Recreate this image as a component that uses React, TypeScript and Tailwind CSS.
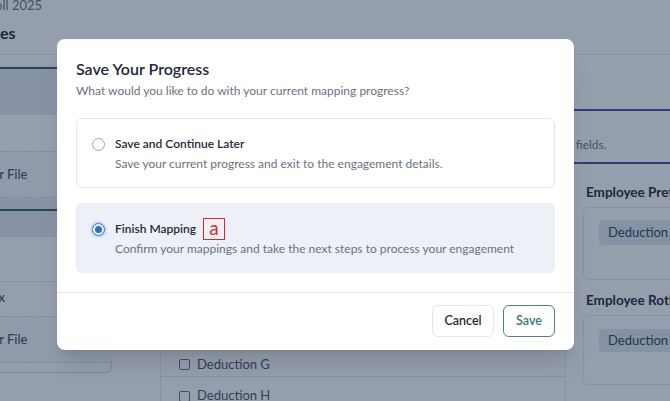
import React, { useState } from "react";

type Option = {
  id: string;
  title: string;
  description: string;
};

const options: Option[] = [
  {
    id: "later",
    title: "Save and Continue Later",
    description: "Save your current progress and exit to the engagement details.",
  },
  {
    id: "finish",
    title: "Finish Mapping",
    description: "Confirm your mappings and take the next steps to process your engagement",
  },
];

const UploadBox: React.FC<{ className?: string }> = ({ className = "" }) => (
  <div
    className={`flex h-[47px] items-center border-y border-dashed border-[#d1d5db] bg-[#f8fafc] pl-[34px] text-[13px] font-medium text-[#4b5563] ${className}`}
  >
    Upload Your File
  </div>
);

const FieldCard: React.FC<{ title: string; chip: string; height: string; chipHeight: string }> = ({
  title,
  chip,
  height,
  chipHeight,
}) => (
  <div className="flex flex-col gap-[6px] whitespace-nowrap">
    <div className="ml-[3px] text-[13.5px] font-bold leading-[18px] text-[#1f2937]">{title}</div>
    <div className={`rounded-md border border-[#e5e7eb] pl-[15px] pt-[11px] ${height}`}>
      <span
        className={`inline-flex items-center rounded bg-[#e2e8f0] px-[9px] text-[13px] text-[#374151] ${chipHeight}`}
      >
        {chip}
      </span>
    </div>
  </div>
);

export default function App() {
  const [choice, setChoice] = useState("finish");

  return (
    <div
      className="relative h-[401px] w-[670px] overflow-hidden bg-white"
      style={{ fontFamily: 'Lato, "Open Sans", sans-serif' }}
    >
      {/* page underneath the dialog */}
      <div className="flex h-[55px] flex-col border-b border-[#e5e7eb]">
        <div className="-ml-[30px] mt-[-4px] text-[13px] text-[#6b7280]">Payroll 2025</div>
        <div className="-ml-[17px] mt-[5px] text-[16px] font-bold text-[#1f2937]">Files</div>
      </div>
      <div className="flex">
        {/* left sidebar */}
        <div className="-ml-[100px] mt-[12px] w-[212px] shrink-0">
          <div className="border-t-2 border-[#2f5f6b]">
            <div className="h-[45px] bg-[#e6ebf0]" />
            <div className="h-[35px] border-t border-[#e5e7eb]" />
            <UploadBox className="mt-[2px]" />
            <div className="h-[11px] bg-[#e8edf2]" />
          </div>
          <div className="border-t-2 border-[#2f5f6b]">
            <div className="h-[25px] bg-[#e6ebf0]" />
            <div className="h-[45px] border-t border-[#e5e7eb]" />
            <div className="flex h-[33px] items-center justify-end border-t border-[#e5e7eb] pr-[107px] text-[13px] text-[#374151]">
              Tax
            </div>
            <UploadBox className="mt-[2px]" />
          </div>
          <div className="h-[10px] rounded-b-md border-x border-b border-[#d1d5db]" />
        </div>

        {/* middle list */}
        <div className="ml-[48px] w-[405px] shrink-0 border-l border-[#e5e7eb] pt-[298px]">
          <div className="flex h-[24px] items-center gap-[7px] border-b border-[#e5e7eb] pl-[18px] text-[13px] text-[#4b5563]">
            <span className="h-[11px] w-[11px] rounded-[2px] border border-[#6b7280]" />
            Deduction G
          </div>
          <div className="flex h-[38px] items-center gap-[7px] pl-[18px] text-[13px] text-[#4b5563]">
            <span className="h-[11px] w-[11px] rounded-[2px] border border-[#6b7280]" />
            Deduction H
          </div>
        </div>

        {/* right mapping column */}
        <div className="w-[160px] shrink-0 border-l border-[#e5e7eb]">
          <div className="h-[56px] border-b-2 border-[#3f51b5]" />
          <div className="h-[53px] overflow-hidden whitespace-nowrap border-b-2 border-[#3f51b5] pt-[26px] text-[12px] leading-[16px] text-[#6b7280]">
            <span className="-ml-[106px] inline-block">Complete all required fields.</span>
          </div>
          <div className="flex flex-col pl-[17px] pt-[19px]">
            <FieldCard title="Employee Pretax" chip="Deduction A" height="h-[73px]" chipHeight="h-[25px]" />
            <div className="h-[11px]" />
            <FieldCard title="Employee Roth" chip="Deduction B" height="h-[70px]" chipHeight="h-[23px]" />
          </div>
        </div>
      </div>

      {/* dimmed backdrop with the dialog */}
      <div className="absolute inset-0 bg-[#15274a]/45 pl-[57px] pt-[39px]">
        <div className="w-[517px] rounded-lg bg-white shadow-xl">
          <div className="px-[19px] pt-[20px]">
            <h2 className="text-[16px] font-semibold leading-[20px] text-[#1f2937]">Save Your Progress</h2>
            <p className="mt-[3px] text-[12px] leading-[18px] text-[#6b7280]">
              What would you like to do with your current mapping progress?
            </p>
            <div className="mt-[18px] flex flex-col gap-[15px]">
              {options.map((o) => {
                const active = choice === o.id;
                return (
                  <label
                    key={o.id}
                    className={`flex h-[70px] cursor-pointer gap-[10px] rounded-md border px-[15px] pt-[16px] ${
                      active ? "border-[#eceef5] bg-[#eef0f8]" : "border-[#e5e7eb] bg-white"
                    }`}
                  >
                    <input
                      type="radio"
                      name="progress"
                      checked={active}
                      onChange={() => setChoice(o.id)}
                      className="sr-only"
                    />
                    <span
                      className={`mt-[3px] flex h-[13px] w-[13px] shrink-0 items-center justify-center rounded-full border ${
                        active ? "border-[#2f6fbf] ring-2 ring-[#c9dbf2]" : "border-[#9ca3af]"
                      }`}
                    >
                      {active && <span className="h-[7px] w-[7px] rounded-full bg-[#2f6fbf]" />}
                    </span>
                    <span className="flex flex-col">
                      <span className="flex h-[18px] items-center gap-[7px] whitespace-nowrap text-[12px] font-semibold leading-[18px] text-[#1f2937]">
                        {o.title}
                        {o.id === "finish" && (
                          <span className="flex h-[22px] w-[22px] items-center justify-center border-[1.5px] border-[#d42a2a] pb-[3px] text-[19px] font-normal leading-none text-[#d42a2a]">
                            a
                          </span>
                        )}
                      </span>
                      <span className="mt-[2px] whitespace-nowrap text-[12px] leading-[18px] text-[#6b7280]">
                        {o.description}
                      </span>
                    </span>
                  </label>
                );
              })}
            </div>
          </div>
          <div className="mt-[19px] flex justify-end gap-[9px] border-t border-[#e5e7eb] px-[19px] pb-[13px] pt-[12px]">
            <button className="h-[32px] w-[62px] rounded-md border border-[#e5e7eb] bg-white text-[12.5px] font-semibold text-[#1f2937]">
              Cancel
            </button>
            <button className="h-[32px] w-[52px] rounded-md border border-[#4f7f84] bg-white text-[12.5px] font-semibold text-[#3a7780]">
              Save
            </button>
          </div>
        </div>
      </div>
    </div>
  );
}
